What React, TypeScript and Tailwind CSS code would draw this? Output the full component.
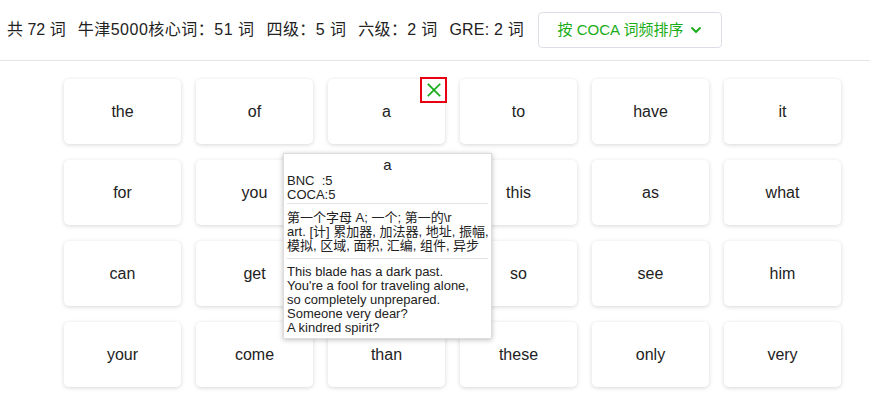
import React from 'react';

const words = [
  'the', 'of', 'a', 'to', 'have', 'it',
  'for', 'you', 'do', 'this', 'as', 'what',
  'can', 'get', 'go', 'so', 'see', 'him',
  'your', 'come', 'than', 'these', 'only', 'very',
];

const font = { fontFamily: '"Liberation Sans", "Noto Sans CJK SC", sans-serif' };

export default function App() {
  return (
    <div className="relative w-[870px] h-[400px] overflow-hidden bg-white text-[#222]" style={font}>
      {/* header stats */}
      <div className="h-[61px] flex items-center pl-[7px] border-b border-[#e5e5e5] text-[16px] text-[#222]">
        <span>共 72 词</span>
        <span className="ml-[12px] tracking-[0.5px]">牛津5000核心词：51 词</span>
        <span className="ml-[12px] tracking-[0.4px]">四级：5 词</span>
        <span className="ml-[12px] tracking-[0.3px]">六级：2 词</span>
        <span className="ml-[12px] tracking-[0.2px]">GRE: 2 词</span>
        <button className="ml-[14px] h-[36px] w-[184px] flex items-center justify-center gap-[7px] rounded-[4px] border border-[#dcdfe6] bg-white text-[15px] text-[#1aad19]">
          <span>按 COCA 词频排序</span>
          <svg width="12" height="12" viewBox="0 0 24 24" fill="none" stroke="#1aad19" strokeWidth="3.8" strokeLinecap="round" strokeLinejoin="round">
            <path d="M4 8l8 8 8-8" />
          </svg>
        </button>
      </div>

      {/* word cards */}
      <div className="grid grid-cols-[repeat(6,117px)] gap-x-[15px] gap-y-[16px] pl-[64px] pt-[18px]">
        {words.map((w) => (
          <div
            key={w}
            className="relative h-[65px] flex items-center justify-center rounded-[5px] bg-white text-[16px] text-[#222] shadow-[0_1px_4px_rgba(0,0,0,0.16)]"
          >
            {w}
            {w === 'a' && (
              <div className="absolute -top-[2px] -right-[2px] w-[27px] h-[26px] border-2 border-[#e60012] flex items-center justify-center">
                <svg width="16" height="16" viewBox="0 0 20 20" stroke="#1aad19" strokeWidth="2.2" strokeLinecap="square">
                  <path d="M3 3l14 14M17 3L3 17" />
                </svg>
              </div>
            )}
          </div>
        ))}
      </div>

      {/* tooltip */}
      <div className="absolute left-[283px] top-[153px] w-[209px] bg-white border border-[#dcdcdc] shadow-[0_1px_5px_rgba(0,0,0,0.25)] pl-[3px] pr-0 pb-[3px] text-[13px] leading-[14px] text-[#222]">
        <div className="text-center text-[15px] leading-[18px] pt-[2px] pr-[3px]">a</div>
        <div className="whitespace-pre">BNC  :5</div>
        <div>COCA:5</div>
        <div className="border-t border-[#e2e2e2] mt-[1px] mb-[7px] mr-[3px]" />
        <div>第一个字母 A; 一个; 第一的\r</div>
        <div>art. [计] 累加器, 加法器, 地址, 振幅, 模拟, 区域, 面积, 汇编, 组件, 异步</div>
        <div className="border-t border-[#e2e2e2] mt-[5px] mb-[6px] mr-[3px]" />
        <div>This blade has a dark past.</div>
        <div>You're a fool for traveling alone,</div>
        <div>so completely unprepared.</div>
        <div>Someone very dear?</div>
        <div>A kindred spirit?</div>
      </div>
    </div>
  );
}
